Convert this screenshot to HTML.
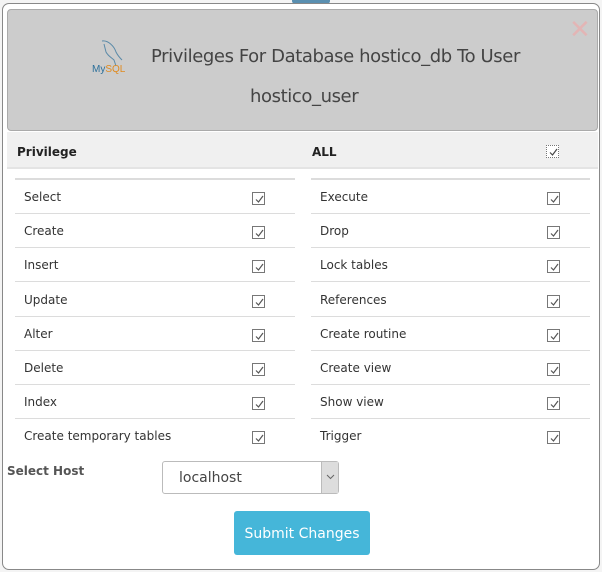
<!DOCTYPE html>
<html><head><meta charset="utf-8"><style>
*{box-sizing:border-box;margin:0;padding:0}
body{width:602px;height:572px;background:#f4f4f4;font-family:"DejaVu Sans","Liberation Sans",sans-serif;color:#333;position:relative;overflow:hidden}
.modal{position:absolute;left:2px;top:3px;width:598px;height:567px;background:#fff;border:1px solid #888;border-radius:7px}
.tab{position:absolute;left:292px;top:0;width:38px;height:4px;background:#5a8fb0;border-radius:0 0 3px 3px}
.head{position:absolute;left:7px;top:9px;width:591px;height:122px;background:#cccccc;border:1px solid #aaa;border-radius:4px}
.title{position:absolute;left:151px;top:46px;font-size:18px;color:#444;letter-spacing:-0.4px}
.title2{position:absolute;left:250px;top:86px;font-size:18px;color:#444;letter-spacing:-0.4px}
.x{position:absolute;left:569px;top:14px;font-size:26px;color:#e3b5b5;font-family:"Liberation Sans",sans-serif}
.th{position:absolute;left:7px;top:132px;width:591px;height:37px;background:#f0f0f0;border-bottom:2px solid #e4e4e4}
.b{position:absolute;font-weight:bold;font-size:12px;color:#222}
.line{position:absolute;height:1px;background:#dcdcdc}
.t{position:absolute;font-size:12px;color:#333}
.cb{position:absolute;width:13px;height:13px;border:1px solid #777;background:#fff}
.cb svg{position:absolute;left:1px;top:1px}
.sel{position:absolute;left:162px;top:461px;width:177px;height:33px;border:1px solid #bbb;border-radius:3px;background:#fff}
.sel span{position:absolute;left:16px;top:8px;font-size:14px;color:#444}
.arr{position:absolute;right:0;top:0;width:17px;height:31px;background:#ddd;border-left:1px solid #bbb}
.btn{position:absolute;left:234px;top:511px;width:136px;height:44px;background:#45b6d9;border-radius:3px;color:#fff;font-size:14px;text-align:center;line-height:44px}
</style></head><body>
<div class="tab"></div>
<div class="modal"></div>
<div class="head"></div>
<svg style="position:absolute;left:90px;top:38px" width="56" height="40" viewBox="0 0 56 40">
<path d="M12 3 C18 2 24 8 26 14 C28 18 30 20 32 22 M14 6 L16 14 C18 18 22 20 24 22 L26 28" fill="none" stroke="#5b8aa8" stroke-width="1"/>
<text x="2" y="34" font-size="10" font-family="Liberation Sans,sans-serif" fill="#2b6f9a">My<tspan fill="#e08a1e">SQL</tspan></text>
</svg>
<div class="title">Privileges For Database hostico_db To User</div>
<div class="title2">hostico_user</div>
<div class="x">✕</div>
<div class="th"></div>
<div class="b" style="left:17px;top:145px">Privilege</div>
<div class="b" style="left:312px;top:145px">ALL</div>
<div class="cb" style="left:546px;top:145px;border-style:dotted"><svg width="11" height="11"><path d="M2 5.5 L4.5 8 L9 2" stroke="#444" fill="none" stroke-width="1.2"/></svg></div>
<div class="line" style="left:15px;top:178px;width:280px;height:2px"></div>
<div class="line" style="left:311px;top:178px;width:279px;height:2px"></div>
<div id="rows"></div>
<script>
var L=["Select","Create","Insert","Update","Alter","Delete","Index","Create temporary tables"],
R=["Execute","Drop","Lock tables","References","Create routine","Create view","Show view","Trigger"],h="";
for(var i=0;i<8;i++){var y=189+i*34.2;
h+='<div class="t" style="left:24px;top:'+(y+1)+'px">'+L[i]+'</div><div class="t" style="left:320px;top:'+(y+1)+'px">'+R[i]+'</div>';
var ck='<svg width="11" height="11"><path d="M2 5.5 L4.5 8 L9 2" stroke="#555" fill="none" stroke-width="1.2"/></svg>';
h+='<div class="cb" style="left:252px;top:'+(y+3)+'px">'+ck+'</div><div class="cb" style="left:547px;top:'+(y+3)+'px">'+ck+'</div>';
if(i<7){h+='<div class="line" style="left:15px;top:'+(y+24)+'px;width:280px"></div><div class="line" style="left:311px;top:'+(y+24)+'px;width:279px"></div>';}}
document.getElementById('rows').innerHTML=h;
</script>
<div class="b" style="left:7px;top:464px;color:#555">Select Host</div>
<div class="sel"><span>localhost</span><div class="arr"><svg width="17" height="31"><path d="M5 13 L8.5 16.5 L12 13" stroke="#666" fill="none"/></svg></div></div>
<div class="btn" style="line-height:46px">Submit Changes</div>
</body></html>
